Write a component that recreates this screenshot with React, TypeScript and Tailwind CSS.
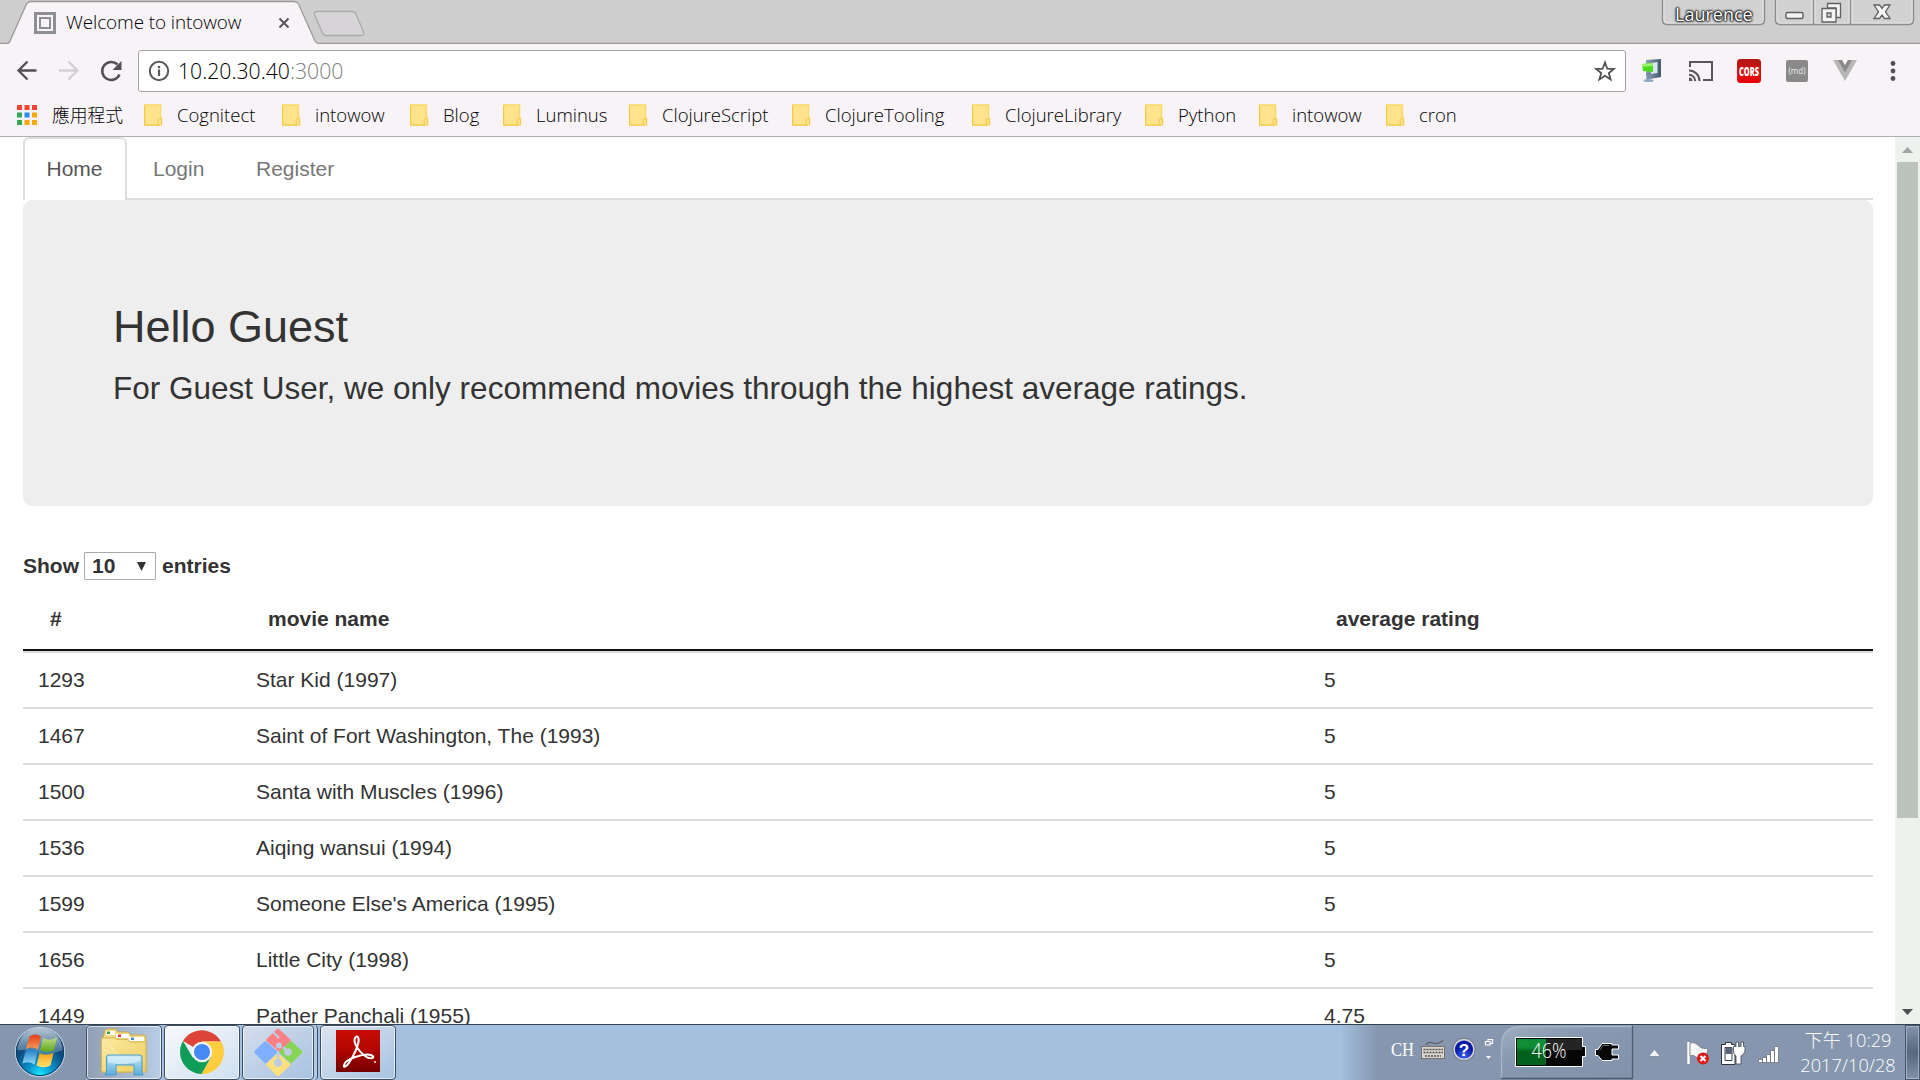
import React from "react";

const movies: [string, string, string][] = [
  ["1293", "Star Kid (1997)", "5"],
  ["1467", "Saint of Fort Washington, The (1993)", "5"],
  ["1500", "Santa with Muscles (1996)", "5"],
  ["1536", "Aiqing wansui (1994)", "5"],
  ["1599", "Someone Else's America (1995)", "5"],
  ["1656", "Little City (1998)", "5"],
  ["1449", "Pather Panchali (1955)", "4.75"],
];

const bookmarks: [string, string][] = [
  ["Cognitect", "w-[138px]"],
  ["intowow", "w-[128px]"],
  ["Blog", "w-[93px]"],
  ["Luminus", "w-[126px]"],
  ["ClojureScript", "w-[163px]"],
  ["ClojureTooling", "w-[180px]"],
  ["ClojureLibrary", "w-[173px]"],
  ["Python", "w-[114px]"],
  ["intowow", "w-[127px]"],
  ["cron", "w-[80px]"],
];

function TabStrip() {
  return (
    <div className="relative flex h-11 shrink-0 bg-[#cecece]">
      <svg className="absolute inset-0" width="1920" height="44" viewBox="0 0 1920 44">
        <path d="M0 43.5H7Q9 43.5 10 41L26.5 4Q28 1.500 31 1.500H294Q297 1.500 298.500 4L315 41Q316.500 43.500 319 43.500H1920V45H0Z" fill="#f7f3f7" />
        <path d="M0 43.5H7Q9 43.5 10 41L26.500 4Q28 1.500 31 1.500H294Q297 1.500 298.500 4L315 41Q316.500 43.500 319 43.500H1920" fill="none" stroke="#9a9a9a" strokeWidth="1.300" />
        <path d="M317 11.500H352Q355 11.500 356 14L363.500 32Q364.500 35.500 361 35.500H326Q323.500 35.500 322 32L314.500 14.500Q313.500 11.500 317 11.500Z" fill="#d6d4d6" stroke="#acaaac" strokeWidth="1.300" />
        <g fill="none" stroke="#8d8f92">
          <rect x="35.500" y="13.500" width="19" height="19" strokeWidth="3" />
          <rect x="40" y="18" width="10" height="10" strokeWidth="2" />
        </g>
        <path d="M279.500 18.500l9 9m0-9l-9 9" stroke="#57575a" strokeWidth="2" />
        <g fill="#d2d2d2" stroke="#8b8b8b" strokeWidth="1.400">
          <path d="M1662.500 -2V20Q1662.500 24.500 1667 24.500H1760Q1764.500 24.500 1764.500 20V-2" />
          <path d="M1775.500 -2V20Q1775.500 24.500 1780 24.500H1909Q1913.500 24.500 1913.500 20V-2" />
          <path d="M1813.500 0V24M1850.500 0V24" />
        </g>
        <path d="M1664 0V20Q1664 23 1667 23H1760Q1763 23 1763 20V0M1777 0V20Q1777 23 1780 23H1812V0M1815 0V23H1849V0M1852 0V23H1909Q1912 23 1912 20V0" fill="none" stroke="#e2e2e2" />
        <rect x="1786" y="12.500" width="17" height="6" rx="1.500" fill="#f4f4f4" stroke="#606060" strokeWidth="1.400" />
        <g fill="#f4f4f4" stroke="#606060" strokeWidth="1.300" fillRule="evenodd">
          <path d="M1827.500 3.500H1840.500V17.500H1836V8H1827.500Z" />
          <path d="M1822 8.500H1836V22H1822ZM1827 13H1831V17H1827Z" />
          <path d="M1874 5H1879.500L1882 8.500L1884.500 5H1890L1885.500 11.700L1890 18.500H1884.500L1882 15L1879.500 18.500H1874L1878.500 11.700Z" />
        </g>
      </svg>
      <span className="relative ml-[66px] mt-[8px] h-7 w-[1609px] text-[18.900px] font-[350] leading-7 tracking-[-0.1px] text-black">Welcome to intowow</span>
      <span className="relative h-6 w-[84px] pt-0.5 text-[18px] leading-6 text-white [text-shadow:0_0_2px_#000,0_0_2px_#000,0_0_2px_#000,0_0_3px_#222]">Laurence</span>
    </div>
  );
}

function Toolbar() {
  return (
    <div className="flex h-[54px] shrink-0 items-center bg-[#f7f3f7]">
      <svg width="138" height="54" viewBox="0 44 138 54" fill="none" strokeWidth="2.300">
        <path d="M36.500 70.500H19M27.500 61.500L18.500 70.500L27.500 79.500" stroke="#505052" />
        <path d="M59 70.500H77M68.500 61.500L77.500 70.500L68.500 79.500" stroke="#d2d0d3" />
        <path d="M119.500 74.500A9 9 0 1 1 117.500 64.500" stroke="#505052" strokeWidth="2.500" />
        <path d="M121.500 61V70H112.500Z" fill="#505052" />
      </svg>
      <div className="flex h-[42px] w-[1488px] items-center rounded-[3px] border border-[#a5a3a6] bg-white">
        <svg className="ml-[9px] shrink-0" width="22" height="22" viewBox="0 0 22 22">
          <circle cx="11" cy="11" r="9.200" fill="none" stroke="#58585a" strokeWidth="2" />
          <path d="M11 9.500V16M11 6V8.200" stroke="#58585a" strokeWidth="2.200" />
        </svg>
        <span className="ml-[8px] flex-1 pb-px text-[21.200px] font-[350] leading-7 text-black">
          <span>10.20.30.40</span><span className="text-[#808080]">:3000</span>
        </span>
        <svg className="mr-[9px] shrink-0" width="22" height="22" viewBox="0 0 22 22">
          <path d="M11 2.500L13.300 8.700L20 9L14.800 13.100L16.600 19.500L11 15.800L5.400 19.500L7.200 13.100L2 9L8.700 8.700Z" fill="none" stroke="#505052" strokeWidth="1.800" />
        </svg>
      </div>
      <svg width="294" height="54" viewBox="1626 44 294 54">
        <defs>
          <linearGradient id="monitor" x2="1"><stop stopColor="#8fa4b5" /><stop offset="1" stopColor="#41576a" /></linearGradient>
          <linearGradient id="cors" x2="0" y2="1"><stop stopColor="#b31512" /><stop offset=".45" stopColor="#cf1512" /><stop offset="1" stopColor="#ec0000" /></linearGradient>
        </defs>
        <path d="M1646 60L1661 59V77L1650 79L1646 75Z" fill="url(#monitor)" />
        <path d="M1651 63L1657.500 62V73L1651 74Z" fill="#d7e6ee" />
        <path d="M1642 64L1653 63V72L1643 71Z" fill="#4ddb1d" />
        <path d="M1642 64L1653 63V66L1642 67Z" fill="#9bf36c" />
        <path d="M1648 73V80" stroke="#6e8fa6" strokeWidth="3" />
        <ellipse cx="1648.500" cy="80.500" rx="5" ry="1.600" fill="#8aacc2" />
        <g fill="none" stroke="#58585a" strokeWidth="2">
          <path d="M1690 67V62H1712V80H1703" />
          <path d="M1689 70.500A10.500 10.500 0 0 1 1699.500 81M1689 74.800A6.200 6.200 0 0 1 1695.200 81" />
        </g>
        <path d="M1689 77.500A3.500 3.500 0 0 1 1692.500 81H1689Z" fill="#58585a" />
        <rect x="1737" y="59" width="24" height="24" rx="3.500" fill="url(#cors)" />
        <text x="1749" y="75.500" textAnchor="middle" textLength="20" lengthAdjust="spacingAndGlyphs" fontFamily="Open Sans" fontWeight="800" fontSize="12" fill="#fff">CORS</text>
        <rect x="1786" y="60" width="22" height="22" rx="2" fill="#898989" />
        <text x="1797" y="74" textAnchor="middle" textLength="17" lengthAdjust="spacingAndGlyphs" fontFamily="Open Sans" fontSize="9.500" fill="#eee">(md)</text>
        <path d="M1833 60H1842L1845 65.500L1848 60H1857L1845 81Z" fill="#b7b7b7" />
        <path d="M1838 60H1842L1845 65.500L1848 60H1852L1845 72.500Z" fill="#898989" />
        <g fill="#505052"><circle cx="1893" cy="63.500" r="2.400" /><circle cx="1893" cy="71" r="2.400" /><circle cx="1893" cy="78.500" r="2.400" /></g>
      </svg>
    </div>
  );
}

function Folder() {
  return (
    <svg className="shrink-0" width="19" height="22" viewBox="0 0 19 22">
      <path d="M.800 1H16.500V14.500H17.500V20.800H.800Z" fill="#ffe38d" stroke="#f8da66" strokeWidth="1.500" />
      <path d="M.500 2V21.200H16M14.200 21V15.500Q14.200 14.500 15.500 14.500Q17.500 14.500 17.500 16V21" fill="none" stroke="#f2c94a" />
    </svg>
  );
}

function BookmarksBar() {
  const colors = ["#f44336", "#f44336", "#f44336", "#34a853", "#2a8cf7", "#f9a90a", "#34a853", "#f9a90a", "#f9a90a"];
  return (
    <div className="flex h-[39px] shrink-0 items-center border-b border-[#b0aeb1] bg-[#f7f3f7] pb-1">
      <svg className="ml-[17px]" width="20" height="20" viewBox="0 0 20 20">
        {colors.map((c, i) => (
          <rect key={i} x={(i % 3) * 7.5} y={Math.floor(i / 3) * 7.5} width="5" height="5" fill={c} />
        ))}
      </svg>
      <span className="ml-[15px] w-[92px] whitespace-nowrap pb-0.5 font-['Noto_Sans_CJK_TC',sans-serif] text-[17.800px] font-light leading-6 text-black">應用程式</span>
      {bookmarks.map(([name, width], i) => (
        <div key={i} className={`flex shrink-0 items-center gap-3.5 whitespace-nowrap text-[18.500px] font-[350] leading-6 text-black ${width}`}>
          <Folder />
          <span>{name}</span>
        </div>
      ))}
    </div>
  );
}

function PageContent() {
  return (
    <div className="h-[887px] min-w-0 flex-1 overflow-hidden bg-white pl-[23px] pr-[22px] font-['Liberation_Sans',Arial,sans-serif] text-[21px] leading-[30px] text-[#333]">
      <nav className="flex h-[63px] border-b-2 border-[#ddd]">
        <a className="h-[63px] w-[104px] rounded-t-[6px] border-2 border-b-0 border-[#ddd] bg-white pl-[21.500px] pt-[15px] text-[#555]">Home</a>
        <a className="ml-[26px] w-[103px] pt-[17px] text-[#777]">Login</a>
        <a className="pt-[17px] text-[#777]">Register</a>
      </nav>
      <section className="h-[306px] rounded-[9px] bg-[#eee] pl-[90px] pt-[102px]">
        <h2 className="text-[45px] leading-[49px]">Hello Guest</h2>
        <p className="mt-[15px] text-[31.500px] leading-[44px]">For Guest User, we only recommend movies through the highest average ratings.</p>
      </section>
      <div className="mt-[45px] flex h-[30px] items-center font-bold">
        <span>Show</span>
        <div className="ml-[5px] mr-[6px] flex h-7 w-[72px] items-center justify-between rounded-[1px] border border-[#a9a9a9] bg-white pl-[7px] pr-[9px]">
          <span>10</span>
          <svg width="9" height="9" viewBox="0 0 9 9"><path d="M0 0H9L4.500 9Z" fill="#333" /></svg>
        </div>
        <span>entries</span>
      </div>
      <table className="mt-[8px] w-full table-fixed border-separate border-spacing-0 text-left">
        <colgroup><col className="w-[218px]" /><col className="w-[1068px]" /><col /></colgroup>
        <thead>
          <tr>
            {["#", "movie name", "average rating"].map((h) => (
              <th key={h} className="h-[62px] border-b-2 border-[#111] p-0 pl-[27px] font-bold">{h}</th>
            ))}
          </tr>
        </thead>
        <tbody>
          {movies.map(([id, name, rating]) => (
            <tr key={id}>
              <td className="h-14 border-t-2 border-[#ddd] p-0 pl-[15px]">{id}</td>
              <td className="h-14 border-t-2 border-[#ddd] p-0 pl-[15px]">{name}</td>
              <td className="h-14 border-t-2 border-[#ddd] p-0 pl-[15px]">{rating}</td>
            </tr>
          ))}
        </tbody>
      </table>
    </div>
  );
}

function Scrollbar() {
  return (
    <div className="flex h-[887px] w-[25px] shrink-0 flex-col items-center bg-[#edf2ee]">
      <svg className="mt-2.5 shrink-0" width="11" height="6" viewBox="0 0 11 6"><path d="M0 6L5.500 0L11 6Z" fill="#a3a3a3" /></svg>
      <div className="mt-[9px] h-[656px] w-[21px] bg-[#bcc3bd]" />
      <svg className="mb-[9px] mt-auto shrink-0" width="11" height="6" viewBox="0 0 11 6"><path d="M0 0L5.500 6L11 0Z" fill="#505050" /></svg>
    </div>
  );
}

function TaskButton({ className, children }: { className: string; children: React.ReactNode }) {
  return (
    <div className={`flex h-[55px] items-center justify-center rounded-[4px] border border-[#3d4f66] pb-px shadow-[inset_0_0_0_1px_rgba(255,255,255,0.65)] ${className}`}>
      {children}
    </div>
  );
}

function StartOrb() {
  return (
    <svg className="ml-[14px] mt-px" width="52" height="52" viewBox="0 0 52 52">
      <defs>
        <radialGradient id="orb" cx=".5" cy=".95" r=".9"><stop stopColor="#19e6ff" /><stop offset=".3" stopColor="#0c8fc9" /><stop offset=".65" stopColor="#0b4a7c" /><stop offset="1" stopColor="#35587c" /></radialGradient>
        <linearGradient id="gloss" x2="0" y2="1"><stop stopColor="#e6edf4" stopOpacity=".75" /><stop offset="1" stopColor="#a9c2d8" stopOpacity=".3" /></linearGradient>
        <linearGradient id="flagRed" x2="0" y2="1"><stop stopColor="#e23d1c" /><stop offset="1" stopColor="#f99b55" /></linearGradient>
        <linearGradient id="flagGreen" x2="0" y2="1"><stop stopColor="#bfdc88" /><stop offset="1" stopColor="#5ca51c" /></linearGradient>
        <linearGradient id="flagBlue" x2="0" y2="1"><stop stopColor="#2581c9" /><stop offset="1" stopColor="#93dbfa" /></linearGradient>
        <linearGradient id="flagGold" x2="0" y2="1"><stop stopColor="#f7a21b" /><stop offset="1" stopColor="#ffe36e" /></linearGradient>
      </defs>
      <circle cx="26" cy="26" r="24.700" fill="url(#orb)" stroke="#b9cad8" strokeWidth="1.200" />
      <circle cx="26" cy="26" r="23.600" fill="none" stroke="#0d3c66" />
      <path d="M3.500 24A22.500 22.500 0 0 1 48.500 24Q36 30 26 27Q14 24 3.500 24Z" fill="url(#gloss)" />
      <path d="M15.500 10.500Q21 6.500 27 10.500L24 23.500Q18 20 12 23Z" fill="url(#flagRed)" />
      <path d="M29 12Q36 15.500 43 11.500L40 24.500Q33 27.500 26 24.200Z" fill="url(#flagGreen)" />
      <path d="M11.500 25Q17.500 22 23.500 26L20.500 38.500Q15 34.500 8.500 37.500Z" fill="url(#flagBlue)" />
      <path d="M25.500 27Q32 30 39.500 27L36.500 39.500Q29.500 43 22.500 39.500Z" fill="url(#flagGold)" />
    </svg>
  );
}

function ExplorerIcon() {
  return (
    <svg width="50" height="50" viewBox="0 0 50 50">
      <defs>
        <linearGradient id="folderFront" x2="1" y2="1"><stop stopColor="#fbe9a0" /><stop offset="1" stopColor="#efcf62" /></linearGradient>
        <linearGradient id="stand" x2="0" y2="1"><stop stopColor="#c5e8f6" /><stop offset="1" stopColor="#58aede" /></linearGradient>
      </defs>
      <path d="M3 14L6 3Q6.500 2 8 2H17L19 5H29L32 8H45Q47 8 47 11V45H3Z" fill="#f0d87f" stroke="#c9a94a" />
      <path d="M7 4H16V8H7Z" fill="#fff" /><path d="M8 4.500H11V7H8Z" fill="#3c9d3c" />
      <path d="M17 7H30V11H17Z" fill="#fff" /><path d="M19 7.500H22V10H19Z" fill="#e8352c" />
      <path d="M30 10H45V14H30Z" fill="#fff" /><path d="M32 10.500H35V13H32Z" fill="#3f86d8" />
      <path d="M2.500 11H16L18 12.500H28L31 15H47V45H2.500Z" fill="url(#folderFront)" stroke="#d3b656" />
      <path d="M4 14L20 28M10 13L17 30M4 22L18 29" stroke="#fff8d8" strokeWidth=".7" opacity=".7" />
      <path d="M7.500 30Q7.500 28 10 28H40Q43 28 43 30V45L44 48H35V38H17V48H6L7.500 45Z" fill="url(#stand)" stroke="#4c9bcc" />
      <path d="M9 29.500H41V34Q25 40 9 35Z" fill="#e1f5fc" opacity=".65" />
    </svg>
  );
}

function ChromeIcon() {
  return (
    <svg width="44" height="44" viewBox="0 0 44 44">
      <path d="M22 22L3 11A22 22 0 0 1 41 11.500H22Z" fill="#db4437" />
      <path d="M22 22V11.500H41.300A22 22 0 0 1 21.500 44L31 27Z" fill="#ffcd40" />
      <path d="M22 22L31 27L21.500 44A22 22 0 0 1 3 11L12.700 27.500Z" fill="#0f9d58" />
      <circle cx="22" cy="22" r="10.300" fill="#f5f5f5" /><circle cx="22" cy="22" r="8" fill="#4688f4" />
    </svg>
  );
}

function GitIcon() {
  return (
    <svg width="50" height="50" viewBox="0 0 50 50">
      <g strokeLinejoin="round" strokeWidth="2.500">
        <path d="M25 3L36.500 13.500L26 23L14.500 13Z" fill="#fb8083" stroke="#fb8083" />
        <path d="M12.500 15.500L23 25L12.500 35L2.500 25Z" fill="#7fb0ff" stroke="#7fb0ff" />
        <path d="M38 15.500L48 25L38 35L27.500 25Z" fill="#87d554" stroke="#87d554" />
        <path d="M25 28L36 37.500L25 48L14.500 37.500Z" fill="#ffe07c" stroke="#ffe07c" />
      </g>
      <path d="M20 5L26 11M25 26V34M30 20L34 24" fill="none" stroke="#bfcde4" strokeWidth="2.400" />
      <g fill="#bfcde4"><circle cx="26" cy="18.500" r="3" /><circle cx="35" cy="25" r="3.800" /><circle cx="25" cy="36" r="4" /></g>
    </svg>
  );
}

function AcrobatIcon() {
  return (
    <svg className="mb-[3px]" width="44" height="42" viewBox="0 0 44 42">
      <defs><linearGradient id="acro" x2="0" y2="1"><stop stopColor="#c80c05" /><stop offset=".45" stopColor="#b30500" /><stop offset="1" stopColor="#730000" /></linearGradient></defs>
      <rect width="44" height="42" fill="url(#acro)" />
      <path d="M8 35C9 29 28 23 35 25C41 28 34 30 29 26C22 21 17 12 19 8C21 4 24 8 22 14C20 22 13 34 10 36C8 37.500 7.500 36.500 8 35Z" fill="none" stroke="#fff" strokeWidth="2" />
      <circle cx="39" cy="32" r=".9" fill="#fff" />
    </svg>
  );
}

function Tray() {
  return (
    <svg width="461" height="55" viewBox="1340 1025 461 55" className="shrink-0">
      <defs>
        <linearGradient id="trayFade" x2="1"><stop stopColor="#a4c0de" /><stop offset="1" stopColor="#8596ae" /></linearGradient>
        <linearGradient id="panel" x2="1" y2="1"><stop stopColor="#9fadc0" /><stop offset=".35" stopColor="#8799b0" /><stop offset="1" stopColor="#8192aa" /></linearGradient>
        <radialGradient id="help" cx=".5" cy=".85"><stop stopColor="#3a62f5" /><stop offset="1" stopColor="#0719a5" /></radialGradient>
        <linearGradient id="charge" x2="0" y2="1"><stop stopColor="#0f8f37" /><stop offset=".3" stopColor="#0e8d34" /><stop offset=".5" stopColor="#03601a" /><stop offset="1" stopColor="#046220" /></linearGradient>
      </defs>
      <rect x="1340" y="1024" width="461" height="56" fill="#8596ae" />
      <rect x="1340" y="1024" width="38" height="56" fill="url(#trayFade)" />
      <text x="1391" y="1056" textLength="23" lengthAdjust="spacingAndGlyphs" fontFamily="Liberation Serif" fontSize="19" fill="#fff">CH</text>
      <path d="M1426 1045Q1428 1041 1433 1043T1443 1040.500" fill="none" stroke="#5e6066" strokeWidth="1.200" />
      <rect x="1421.500" y="1046.500" width="23" height="12" fill="#d8d5d0" stroke="#77746f" />
      <path d="M1423.500 1049.500H1443M1423.500 1052.500H1443M1425 1056H1441" stroke="#55524e" strokeWidth="1.500" strokeDasharray="2 1" />
      <circle cx="1464" cy="1049.500" r="10" fill="url(#help)" stroke="#d3d4d6" strokeWidth="1.800" />
      <circle cx="1464" cy="1049.500" r="11.200" fill="none" stroke="#5c6370" strokeWidth=".7" />
      <text x="1464" y="1056" textAnchor="middle" fontFamily="Liberation Sans" fontWeight="700" fontSize="17" fill="#fff">?</text>
      <path d="M1488 1041V1039.500H1492.500V1043.500H1490.500M1485.500 1041.500H1490V1045H1485.500Z" fill="none" stroke="#fff" strokeWidth="1.200" />
      <path d="M1486 1056H1491L1488.500 1059Z" fill="#fff" />
      <path d="M1501.500 1078V1044Q1503 1027 1520 1026.500H1632.500V1078.500Z" fill="url(#panel)" />
      <path d="M1501.500 1078V1044Q1503 1027 1520 1026.500H1632" fill="none" stroke="#a7b5c8" strokeWidth="1.300" />
      <path d="M1501 1078.500H1632.500V1026" fill="none" stroke="#4d5b70" strokeWidth="1.300" />
      <path d="M1515.500 1037.500H1582.500V1046.500H1585.500V1056.500H1582.500V1066.500H1515.500Z" fill="#060606" stroke="#fff" />
      <rect x="1517" y="1039" width="29" height="26" fill="url(#charge)" />
      <rect x="1546" y="1039" width="36" height="11" fill="#242424" />
      <text x="1531.500" y="1058" textLength="35" lengthAdjust="spacingAndGlyphs" fontFamily="Open Sans" fontWeight="350" fontSize="19.500" fill="#fff">46%</text>
      <path d="M1595.500 1049.500H1598L1602 1043.500H1612V1045H1618.500V1049H1612V1055H1618.500V1059H1612V1060.500H1602L1598 1055.500H1595.500Z" fill="#080808" stroke="#fff" />
      <path d="M1600 1050L1603 1045.500H1609" fill="none" stroke="#666" />
      <path d="M1648.500 1056.500H1660.500L1654.500 1049.500Z" fill="#f1f3f6" stroke="#6d7d94" strokeWidth=".7" />
      <path d="M1688.500 1042V1064" stroke="#fff" strokeWidth="2.400" />
      <path d="M1690 1043Q1694 1041.500 1698 1045Q1702 1050 1708 1048L1706 1058Q1699 1060 1696 1057Q1693 1054 1690 1056Z" fill="#f6f6f6" stroke="#6d6d6d" strokeWidth=".7" />
      <circle cx="1703" cy="1058.500" r="6" fill="#de1a18" />
      <path d="M1700.500 1056L1705.500 1061M1705.500 1056L1700.500 1061" stroke="#fff" strokeWidth="2" />
      <path d="M1721.500 1044.500H1725.500V1042.500H1731.500V1044.500H1735V1064.500H1721.500Z" fill="#fff" stroke="#30343b" />
      <path d="M1725 1047.500H1732V1060.500H1725Z" fill="#fff" stroke="#38404d" />
      <path d="M1725.500 1047.500H1732V1054H1725.500Z" fill="#56657a" />
      <path d="M1733.500 1046.500H1736V1042H1738.500V1046.500H1741V1042H1743.500V1046.500H1745V1051Q1744 1055 1741 1056V1064H1736V1056Q1733 1054 1733.500 1051Z" fill="#fff" stroke="#3c4450" strokeWidth=".8" />
      <g fill="#fff" stroke="#6d717a" strokeWidth=".8"><path d="M1758.500 1059.500h4v3h-4zM1762.500 1057.500h4v5h-4zM1766.500 1054.500h4v8h-4zM1770.500 1050.500h4v12h-4zM1774.500 1046.500h4v16h-4z" /></g>
    </svg>
  );
}

function Taskbar() {
  return (
    <div className="flex h-[56px] shrink-0 border-t border-[#34424f] bg-[#a4c0de]">
      <div className="h-full w-[86px] shrink-0 bg-[#8596ae]"><StartOrb /></div>
      <TaskButton className="w-[76px] bg-linear-to-r from-[#919fb5] to-[#b9cde6]"><ExplorerIcon /></TaskButton>
      <TaskButton className="ml-[2px] w-[76px] bg-linear-to-br from-[#f7f9fc] to-[#cfdff0]"><ChromeIcon /></TaskButton>
      <div className="ml-[2px] w-[76px] rounded-[4px] border-r border-[#3d4f66] bg-[#b3cae5]">
        <TaskButton className="w-[72px] bg-linear-to-br from-[#d5deec] to-[#a7c2e0]"><GitIcon /></TaskButton>
      </div>
      <TaskButton className="ml-[2px] w-[76px] bg-linear-to-br from-[#dce4f0] to-[#a7c2e0]"><AcrobatIcon /></TaskButton>
      <div className="flex-1" />
      <Tray />
      <div className="flex w-[104px] shrink-0 flex-col items-center bg-[#8596ae] pr-[10px] pt-[3px] font-['Open_Sans','Noto_Sans_CJK_TC',sans-serif] text-[18.200px] font-light leading-[25px] text-white">
        <span className="whitespace-nowrap">下午 10:29</span>
        <span className="whitespace-nowrap">2017/10/28</span>
      </div>
      <div className="h-[55px] w-[15px] shrink-0 border border-[#47566c] bg-linear-to-b from-[#8494aa] via-[#56677e] to-[#8091a8] shadow-[inset_0_0_0_1px_rgba(190,203,220,0.6)]" />
    </div>
  );
}

export default function App() {
  return (
    <div className="flex h-[1080px] w-[1920px] flex-col overflow-hidden bg-white font-['Open_Sans','Noto_Sans_CJK_TC',sans-serif] font-normal">
      <TabStrip />
      <Toolbar />
      <BookmarksBar />
      <main className="flex h-[887px] shrink-0">
        <PageContent />
        <Scrollbar />
      </main>
      <Taskbar />
    </div>
  );
}
